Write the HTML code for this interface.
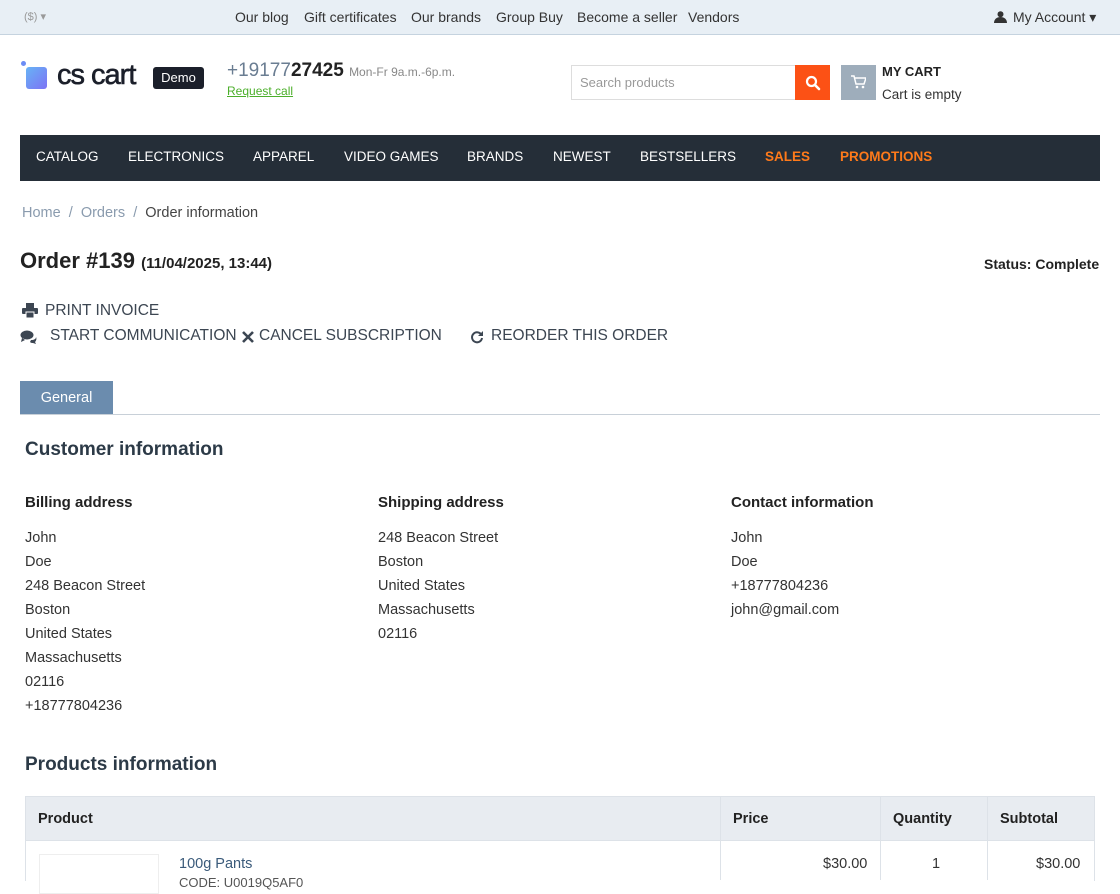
<!DOCTYPE html>
<html><head><meta charset="utf-8"><style>
*{box-sizing:border-box;margin:0;padding:0}
body{width:1120px;height:880px;overflow:hidden;background:#fff;font-family:"Liberation Sans","DejaVu Sans",sans-serif;color:#333;font-size:14px;position:relative}
.abs{position:absolute;white-space:nowrap}
.top{position:absolute;left:0;top:0;width:1120px;height:35px;background:#e8eff5;border-bottom:1px solid #c5d3df}
.top a{position:absolute;top:9px;font-size:14px;color:#333}
.nav{position:absolute;left:20px;top:135px;width:1080px;height:46px;background:#252e38}
.nav span{position:absolute;top:14px;color:#fff;font-size:13.5px}
.h3{font-size:19px;font-weight:bold;color:#2c3a47}
.col div{font-size:14.5px;line-height:24px;color:#333}
.act{font-size:15.5px;color:#3c4652}
</style></head><body>
<div class="top">
<span class="abs" style="left:24px;top:10px;font-size:11px;color:#999">($) ▾</span>
<a style="left:235px">Our blog</a><a style="left:304px">Gift certificates</a><a style="left:411px">Our brands</a><a style="left:496px">Group Buy</a><a style="left:577px">Become a seller</a><a style="left:688px">Vendors</a>
<svg class="abs" style="left:994px;top:11px" width="13" height="12" viewBox="0 0 13 12"><circle cx="6.5" cy="3.2" r="3" fill="#333"/><path d="M0 12c0-4 3-6 6.5-6S13 8 13 12z" fill="#333"/></svg>
<a style="left:1013px">My Account ▾</a>
</div>
<div class="abs" style="left:21px;top:61px;width:5px;height:5px;border-radius:50%;background:#6b8df5"></div>
<div class="abs" style="left:26px;top:67px;width:21px;height:22px;border-radius:3px;background:linear-gradient(135deg,#67b3f5,#7d73f5)"></div>
<span class="abs" style="left:57px;top:59px;font-size:29px;color:#1b1f2a;letter-spacing:-1px;-webkit-text-stroke:0.6px #1b1f2a">cs cart</span>
<span class="abs" style="left:153px;top:67px;width:51px;height:22px;background:#1b1f2a;color:#fff;font-size:13px;border-radius:3px;text-align:center;line-height:21px">Demo</span>
<span class="abs" style="left:227px;top:60px;font-size:19px;color:#6a7d92">+19177<b style="color:#222">27425</b> <span style="font-size:12px;color:#888">Mon-Fr 9a.m.-6p.m.</span></span>
<span class="abs" style="left:227px;top:84px;font-size:12px;color:#4caf2b;text-decoration:underline">Request call</span>
<div class="abs" style="left:571px;top:65px;width:225px;height:35px;border:1px solid #ddd"></div>
<span class="abs" style="left:580px;top:75px;font-size:13px;color:#999">Search products</span>
<div class="abs" style="left:795px;top:65px;width:35px;height:35px;background:#fc5115"></div>
<svg class="abs" style="left:805px;top:75px" width="16" height="16" viewBox="0 0 16 16"><circle cx="6.5" cy="6.5" r="4.5" fill="none" stroke="#fff" stroke-width="2.2"/><path d="M10 10l4 4" stroke="#fff" stroke-width="2.6" stroke-linecap="round"/></svg>
<div class="abs" style="left:841px;top:65px;width:35px;height:35px;background:#9eadbb"></div>
<svg class="abs" style="left:851px;top:75px" width="15" height="14" viewBox="0 0 15 14"><path d="M0 1h3l2 8h8l2-6H4" fill="none" stroke="#fff" stroke-width="1.5"/><circle cx="6" cy="12" r="1.3" fill="#fff"/><circle cx="12" cy="12" r="1.3" fill="#fff"/></svg>
<span class="abs" style="left:882px;top:64px;font-size:13px;font-weight:bold;color:#222">MY CART</span>
<span class="abs" style="left:882px;top:87px;font-size:13.5px;color:#333">Cart is empty</span>
<div class="nav">
<span style="left:16px">CATALOG</span><span style="left:108px">ELECTRONICS</span><span style="left:233px">APPAREL</span><span style="left:324px">VIDEO GAMES</span><span style="left:447px">BRANDS</span><span style="left:533px">NEWEST</span><span style="left:620px">BESTSELLERS</span><span style="left:745px;color:#ff7a1a;font-weight:bold">SALES</span><span style="left:820px;color:#ff7a1a;font-weight:bold">PROMOTIONS</span>
</div>
<span class="abs" style="left:22px;top:205px;font-size:14.5px;color:#8a9bae">Home &nbsp;/&nbsp; Orders &nbsp;/&nbsp; <span style="color:#444">Order information</span></span>
<span class="abs" style="left:20px;top:248px;font-size:22px;font-weight:bold;color:#222">Order #139 <span style="font-size:15px">(11/04/2025, 13:44)</span></span>
<span class="abs" style="left:984px;top:256px;font-size:14px;font-weight:bold;color:#222">Status: Complete</span>
<svg class="abs" style="left:22px;top:303px" width="16" height="15" viewBox="0 0 16 15"><rect x="4" y="0" width="8" height="5" fill="#3c4652"/><rect x="0" y="5" width="16" height="6" rx="1" fill="#3c4652"/><rect x="4" y="9" width="8" height="6" fill="#3c4652" stroke="#fff" stroke-width="1"/></svg>
<span class="abs act" style="left:45px;top:302px">PRINT INVOICE</span>
<svg class="abs" style="left:20px;top:329px" width="17" height="15" viewBox="0 0 17 15"><ellipse cx="7" cy="6" rx="6.5" ry="4.5" fill="#3c4652"/><path d="M2 9l-1 4 4-2z" fill="#3c4652"/><path d="M11 11c3 0 5-1 5-3l0 0c1 2 0 4-1 5l1 2-3-1c-1 0-2 0-3-1z" fill="#3c4652"/></svg>
<span class="abs act" style="left:50px;top:327px">START COMMUNICATION</span>
<svg class="abs" style="left:241px;top:330px" width="14" height="14" viewBox="0 0 14 14"><path d="M2 2l10 10M12 2L2 12" stroke="#3c4652" stroke-width="2.6"/></svg>
<span class="abs act" style="left:259px;top:327px">CANCEL SUBSCRIPTION</span>
<svg class="abs" style="left:470px;top:330px" width="14" height="14" viewBox="0 0 14 14"><path d="M11.5 5A5 5 0 1 0 12 8" fill="none" stroke="#3c4652" stroke-width="2"/><path d="M13 1v5H8z" fill="#3c4652"/></svg>
<span class="abs act" style="left:491px;top:327px">REORDER THIS ORDER</span>
<div class="abs" style="left:20px;top:381px;width:93px;height:33px;background:#6b8cae;color:#fff;font-size:14.5px;text-align:center;line-height:35px">General</div>
<div class="abs" style="left:20px;top:414px;width:1080px;height:1px;background:#c8d0d8"></div>
<span class="abs h3" style="left:25px;top:439px">Customer information</span>
<span class="abs" style="left:25px;top:494px;font-size:15px;font-weight:bold;color:#222">Billing address</span>
<span class="abs" style="left:378px;top:494px;font-size:15px;font-weight:bold;color:#222">Shipping address</span>
<span class="abs" style="left:731px;top:494px;font-size:15px;font-weight:bold;color:#222">Contact information</span>
<div class="abs col" style="left:25px;top:526px"><div>John</div><div>Doe</div><div>248 Beacon Street</div><div>Boston</div><div>United States</div><div>Massachusetts</div><div>02116</div><div>+18777804236</div></div>
<div class="abs col" style="left:378px;top:526px"><div>248 Beacon Street</div><div>Boston</div><div>United States</div><div>Massachusetts</div><div>02116</div></div>
<div class="abs col" style="left:731px;top:526px"><div>John</div><div>Doe</div><div>+18777804236</div><div>john@gmail.com</div></div>
<span class="abs h3" style="left:25px;top:754px">Products information</span>
<div class="abs" style="left:25px;top:796px;width:1070px;height:45px;background:#e8ecf1;border:1px solid #dde2e8"></div>
<div class="abs" style="left:720px;top:796px;width:1px;height:84px;background:#dde2e8"></div>
<div class="abs" style="left:880px;top:796px;width:1px;height:84px;background:#dde2e8"></div>
<div class="abs" style="left:987px;top:796px;width:1px;height:84px;background:#dde2e8"></div>
<div class="abs" style="left:25px;top:841px;width:1px;height:40px;background:#dde2e8"></div>
<div class="abs" style="left:1094px;top:841px;width:1px;height:40px;background:#dde2e8"></div>
<span class="abs" style="left:38px;top:811px;font-size:14.5px;font-weight:bold;color:#222">Product</span>
<span class="abs" style="left:733px;top:811px;font-size:14.5px;font-weight:bold;color:#222">Price</span>
<span class="abs" style="left:893px;top:811px;font-size:14.5px;font-weight:bold;color:#222">Quantity</span>
<span class="abs" style="left:1000px;top:811px;font-size:14.5px;font-weight:bold;color:#222">Subtotal</span>
<div class="abs" style="left:39px;top:854px;width:120px;height:40px;border:1px solid #eee"></div>
<span class="abs" style="left:179px;top:856px;font-size:14.5px;color:#3a5a7a">100g Pants</span>
<span class="abs" style="left:179px;top:875px;font-size:13px;color:#555">CODE: U0019Q5AF0</span>
<span class="abs" style="left:823px;top:856px;font-size:14.5px">$30.00</span>
<span class="abs" style="left:932px;top:856px;font-size:14.5px">1</span>
<span class="abs" style="left:1036px;top:856px;font-size:14.5px">$30.00</span>
</body></html>
